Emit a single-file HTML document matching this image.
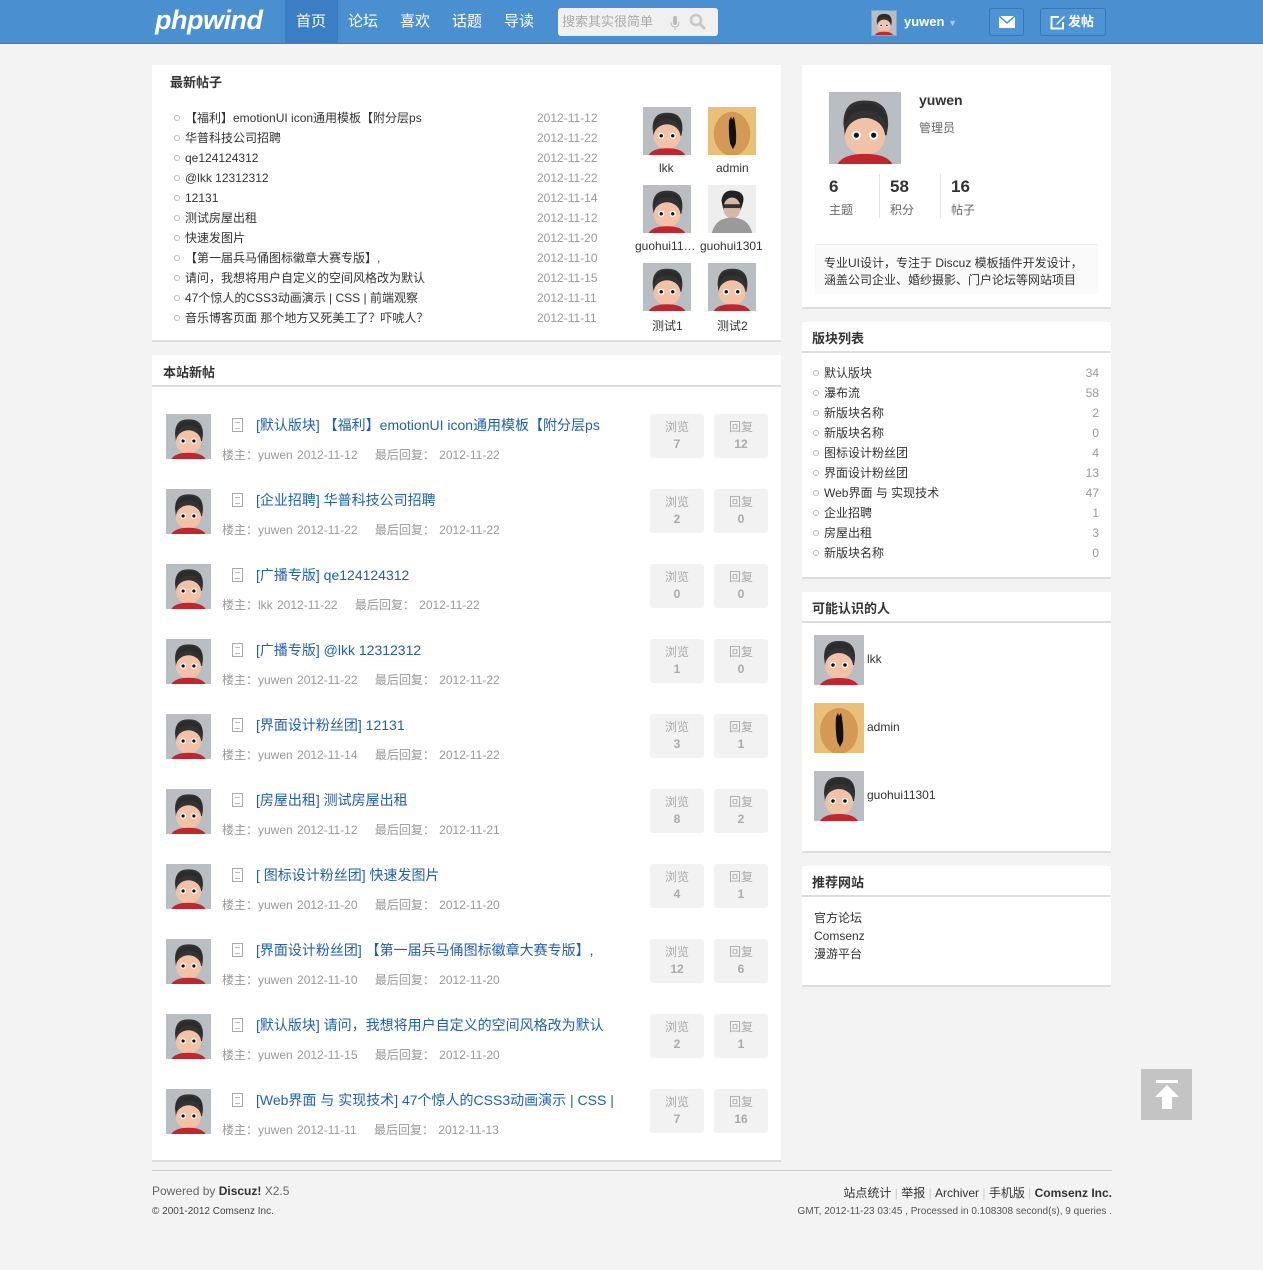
<!DOCTYPE html>
<html><head><meta charset="utf-8">
<style>
*{margin:0;padding:0;box-sizing:border-box}
body{width:1263px;height:1270px;background:#f3f3f3;font-family:"Liberation Sans","Noto Sans CJK SC",sans-serif;font-size:12px;color:#333;position:relative;overflow:hidden}
.a{position:absolute}
#hd{left:0;top:0;width:1263px;height:44px;background:#4a8fd0;border-bottom:1px solid #3b7cbd}
.nav{top:0;height:44px;line-height:44px;color:#fff;font-size:15px;text-align:center;width:52px}
.box{background:#fff;border-bottom:2px solid #ddd}
.ttl{font-weight:bold;font-size:13px;color:#333}
.li{font-size:12px;color:#333;white-space:nowrap}
.li:before{content:"";display:inline-block;width:4px;height:4px;border:1px solid #bbb;border-radius:50%;margin:0 5px 2px 0;vertical-align:middle}
.dt{color:#999;font-size:12px}
.hl{height:2px;background:#ddd}
.tt{color:#1f5fb5;font-size:14px;white-space:nowrap}
.meta{color:#999;font-size:12px;white-space:nowrap;word-spacing:1px}
.cnt{width:54px;height:44px;background:#f2f2f2;border-radius:3px;text-align:center;color:#aaa;font-size:12px;line-height:17px;padding-top:5px}
.cnt b{display:block}
.doc{width:11px;height:14px;border:1px solid #aaa;background:#fff}
.doc:after{content:"";position:absolute;left:2px;top:3px;width:5px;height:5px;border-top:1px solid #bbb;border-bottom:1px solid #bbb}
</style></head><body>
<svg width="0" height="0" style="position:absolute">
<defs>
<symbol id="boy" viewBox="0 0 50 50">
<rect width="50" height="50" fill="#b9bec2"/>
<path d="M10 22 Q10 5 26 6 Q42 6 41 24 L40 30 L11 30Z" fill="#333"/>
<ellipse cx="25" cy="31" rx="14" ry="13" fill="#f2c2a8"/>
<path d="M11 24 Q14 12 28 13 Q38 14 40 26 L40 18 Q36 7 24 8 Q12 9 11 20Z" fill="#2b2b2b"/>
<circle cx="19" cy="30" r="3.2" fill="#fff"/><circle cx="31" cy="30" r="3.2" fill="#fff"/>
<circle cx="19" cy="30" r="1.8" fill="#111"/><circle cx="31" cy="30" r="1.8" fill="#111"/>
<path d="M6 50 Q10 43 25 43 Q40 43 44 50Z" fill="#c0262b"/>
</symbol>
<symbol id="egg" viewBox="0 0 50 50">
<rect width="50" height="50" fill="#e9c07a"/>
<ellipse cx="25" cy="28" rx="19" ry="23" fill="#d49a55"/>
<path d="M22 14 L24 10 L25 13 L27 10 L28 15 Q30 28 29 38 L26 44 L23 38 Q21 26 22 14Z" fill="#111"/>
</symbol>
<symbol id="man" viewBox="0 0 50 50">
<rect width="50" height="50" fill="#eee"/>
<path d="M14 16 Q16 4 28 6 Q40 8 36 20 L34 26 L16 26Z" fill="#222"/>
<ellipse cx="25" cy="24" rx="9" ry="11" fill="#d7b8a4"/>
<rect x="16" y="20" width="18" height="4" fill="#333"/>
<path d="M4 50 Q8 34 25 34 Q42 34 46 50Z" fill="#9a9a9a"/>
</symbol>
</defs></svg>

<div id="hd" class="a">
<div class="a" style="left:155px;top:5px;color:#fff;font-size:27px;font-weight:bold;font-style:italic;letter-spacing:-0.5px">phpwind</div>
<div class="a" style="left:285px;top:0;width:53px;height:44px;background:#3b7ec3"></div>
<div class="a nav" style="left:285px">首页</div>
<div class="a nav" style="left:337px">论坛</div>
<div class="a nav" style="left:389px">喜欢</div>
<div class="a nav" style="left:441px">话题</div>
<div class="a nav" style="left:493px">导读</div>
<div class="a" style="left:558px;top:8px;width:160px;height:28px;background:#f0f0f0;border-radius:3px;color:#aaa;font-size:13px;line-height:28px;padding-left:4px">搜索其实很简单
<svg class="a" style="left:112px;top:8px" width="10" height="14" viewBox="0 0 10 14"><rect x="3" y="0" width="4" height="9" rx="2" fill="#bbb"/><path d="M1 6 Q1 11 5 11 Q9 11 9 6 M5 11 V14" stroke="#bbb" fill="none"/></svg>
<svg class="a" style="left:131px;top:5px" width="18" height="18" viewBox="0 0 18 18"><circle cx="7" cy="7" r="5" stroke="#c8c8c8" stroke-width="2.5" fill="none"/><path d="M11 11 L16 16" stroke="#c8c8c8" stroke-width="3"/></svg>
</div>
<svg class="a" style="left:871px;top:10px;width:26px;height:26px;border:1px solid #7aa9d9"><use href="#boy"/></svg>
<div class="a" style="left:904px;top:14px;color:#fff;font-weight:bold;font-size:13px">yuwen <span style="color:#a9c7e8;font-size:9px">▼</span></div>
<div class="a" style="left:989px;top:8px;width:35px;height:28px;border:1px solid #3a76b4;border-radius:3px;background:#4e93d4">
<svg class="a" style="left:9px;top:7px" width="16" height="12" viewBox="0 0 16 12"><rect width="16" height="12" fill="#fff"/><path d="M0 0 L8 7 L16 0" stroke="#4e93d4" stroke-width="1.5" fill="none"/></svg></div>
<div class="a" style="left:1040px;top:8px;width:66px;height:28px;border:1px solid #3a76b4;border-radius:3px;background:#4e93d4;color:#fff;font-weight:bold;font-size:13px;line-height:26px;padding-left:27px">发帖
<svg class="a" style="left:9px;top:6px" width="16" height="15" viewBox="0 0 16 15"><path d="M9 2 H1.5 V13.5 H13 V7" stroke="#fff" stroke-width="2" fill="none"/><path d="M14 1 L7 8 L6 10 L8 9 L15 2Z" fill="#fff"/></svg></div>
</div>

<!-- 最新帖子 -->
<div class="a box" style="left:152px;top:65px;width:629px;height:277px"></div>
<div class="a ttl" style="left:170px;top:72px">最新帖子</div>
<div class="a" style="left:174px;top:108px;line-height:20px">
<div class="li">【福利】emotionUI icon通用模板【附分层ps</div>
<div class="li">华普科技公司招聘</div>
<div class="li">qe124124312</div>
<div class="li">@lkk 12312312</div>
<div class="li">12131</div>
<div class="li">测试房屋出租</div>
<div class="li">快速发图片</div>
<div class="li">【第一届兵马俑图标徽章大赛专版】,</div>
<div class="li">请问，我想将用户自定义的空间风格改为默认</div>
<div class="li">47个惊人的CSS3动画演示 | CSS | 前端观察</div>
<div class="li">音乐博客页面 那个地方又死美工了？吓唬人？</div>
</div>
<div class="a dt" style="left:537px;top:108px;line-height:20px">2012-11-12<br>2012-11-22<br>2012-11-22<br>2012-11-22<br>2012-11-14<br>2012-11-12<br>2012-11-20<br>2012-11-10<br>2012-11-15<br>2012-11-11<br>2012-11-11</div>
<svg class="a" style="left:643px;top:107px" width="48" height="48"><use href="#boy"/></svg>
<svg class="a" style="left:708px;top:107px" width="48" height="48"><use href="#egg"/></svg>
<svg class="a" style="left:643px;top:185px" width="48" height="48"><use href="#boy"/></svg>
<svg class="a" style="left:708px;top:185px" width="48" height="48"><use href="#man"/></svg>
<svg class="a" style="left:643px;top:263px" width="48" height="48"><use href="#boy"/></svg>
<svg class="a" style="left:708px;top:263px" width="48" height="48"><use href="#boy"/></svg>
<div class="a" style="left:659px;top:161px">lkk</div>
<div class="a" style="left:716px;top:161px">admin</div>
<div class="a" style="left:635px;top:239px;width:66px;overflow:hidden;white-space:nowrap">guohui11…</div>
<div class="a" style="left:700px;top:239px">guohui1301</div>
<div class="a" style="left:652px;top:317px">测试1</div>
<div class="a" style="left:717px;top:317px">测试2</div>

<!-- 本站新帖 -->
<div class="a box" style="left:152px;top:355px;width:629px;height:807px"></div>
<div class="a ttl" style="left:163px;top:362px">本站新帖</div>
<div class="a hl" style="left:152px;top:385px;width:629px"></div>

<div class="a" style="left:152px;top:414px;width:629px;height:750px">
<div class="a" style="top:0;left:0;width:629px">
<svg class="a" style="left:14px;top:0" width="45" height="45"><use href="#boy"/></svg><div class="a doc" style="left:80px;top:4px"></div>
<div class="a tt" style="left:104px;top:1px">[默认版块] 【福利】emotionUI icon通用模板【附分层ps</div>
<div class="a meta" style="left:70px;top:32px">楼主：yuwen 2012-11-12 &nbsp;&nbsp;&nbsp;最后回复： 2012-11-22</div>
<div class="a cnt" style="left:498px;top:0">浏览<b>7</b></div><div class="a cnt" style="left:562px;top:0">回复<b>12</b></div></div>
<div class="a" style="top:75px;left:0;width:629px">
<svg class="a" style="left:14px;top:0" width="45" height="45"><use href="#boy"/></svg><div class="a doc" style="left:80px;top:4px"></div>
<div class="a tt" style="left:104px;top:1px">[企业招聘] 华普科技公司招聘</div>
<div class="a meta" style="left:70px;top:32px">楼主：yuwen 2012-11-22 &nbsp;&nbsp;&nbsp;最后回复： 2012-11-22</div>
<div class="a cnt" style="left:498px;top:0">浏览<b>2</b></div><div class="a cnt" style="left:562px;top:0">回复<b>0</b></div></div>
<div class="a" style="top:150px;left:0;width:629px">
<svg class="a" style="left:14px;top:0" width="45" height="45"><use href="#boy"/></svg><div class="a doc" style="left:80px;top:4px"></div>
<div class="a tt" style="left:104px;top:1px">[广播专版] qe124124312</div>
<div class="a meta" style="left:70px;top:32px">楼主：lkk 2012-11-22 &nbsp;&nbsp;&nbsp;最后回复： 2012-11-22</div>
<div class="a cnt" style="left:498px;top:0">浏览<b>0</b></div><div class="a cnt" style="left:562px;top:0">回复<b>0</b></div></div>
<div class="a" style="top:225px;left:0;width:629px">
<svg class="a" style="left:14px;top:0" width="45" height="45"><use href="#boy"/></svg><div class="a doc" style="left:80px;top:4px"></div>
<div class="a tt" style="left:104px;top:1px">[广播专版] @lkk 12312312</div>
<div class="a meta" style="left:70px;top:32px">楼主：yuwen 2012-11-22 &nbsp;&nbsp;&nbsp;最后回复： 2012-11-22</div>
<div class="a cnt" style="left:498px;top:0">浏览<b>1</b></div><div class="a cnt" style="left:562px;top:0">回复<b>0</b></div></div>
<div class="a" style="top:300px;left:0;width:629px">
<svg class="a" style="left:14px;top:0" width="45" height="45"><use href="#boy"/></svg><div class="a doc" style="left:80px;top:4px"></div>
<div class="a tt" style="left:104px;top:1px">[界面设计粉丝团] 12131</div>
<div class="a meta" style="left:70px;top:32px">楼主：yuwen 2012-11-14 &nbsp;&nbsp;&nbsp;最后回复： 2012-11-22</div>
<div class="a cnt" style="left:498px;top:0">浏览<b>3</b></div><div class="a cnt" style="left:562px;top:0">回复<b>1</b></div></div>
<div class="a" style="top:375px;left:0;width:629px">
<svg class="a" style="left:14px;top:0" width="45" height="45"><use href="#boy"/></svg><div class="a doc" style="left:80px;top:4px"></div>
<div class="a tt" style="left:104px;top:1px">[房屋出租] 测试房屋出租</div>
<div class="a meta" style="left:70px;top:32px">楼主：yuwen 2012-11-12 &nbsp;&nbsp;&nbsp;最后回复： 2012-11-21</div>
<div class="a cnt" style="left:498px;top:0">浏览<b>8</b></div><div class="a cnt" style="left:562px;top:0">回复<b>2</b></div></div>
<div class="a" style="top:450px;left:0;width:629px">
<svg class="a" style="left:14px;top:0" width="45" height="45"><use href="#boy"/></svg><div class="a doc" style="left:80px;top:4px"></div>
<div class="a tt" style="left:104px;top:1px">[ 图标设计粉丝团] 快速发图片</div>
<div class="a meta" style="left:70px;top:32px">楼主：yuwen 2012-11-20 &nbsp;&nbsp;&nbsp;最后回复： 2012-11-20</div>
<div class="a cnt" style="left:498px;top:0">浏览<b>4</b></div><div class="a cnt" style="left:562px;top:0">回复<b>1</b></div></div>
<div class="a" style="top:525px;left:0;width:629px">
<svg class="a" style="left:14px;top:0" width="45" height="45"><use href="#boy"/></svg><div class="a doc" style="left:80px;top:4px"></div>
<div class="a tt" style="left:104px;top:1px">[界面设计粉丝团] 【第一届兵马俑图标徽章大赛专版】,</div>
<div class="a meta" style="left:70px;top:32px">楼主：yuwen 2012-11-10 &nbsp;&nbsp;&nbsp;最后回复： 2012-11-20</div>
<div class="a cnt" style="left:498px;top:0">浏览<b>12</b></div><div class="a cnt" style="left:562px;top:0">回复<b>6</b></div></div>
<div class="a" style="top:600px;left:0;width:629px">
<svg class="a" style="left:14px;top:0" width="45" height="45"><use href="#boy"/></svg><div class="a doc" style="left:80px;top:4px"></div>
<div class="a tt" style="left:104px;top:1px">[默认版块] 请问，我想将用户自定义的空间风格改为默认</div>
<div class="a meta" style="left:70px;top:32px">楼主：yuwen 2012-11-15 &nbsp;&nbsp;&nbsp;最后回复： 2012-11-20</div>
<div class="a cnt" style="left:498px;top:0">浏览<b>2</b></div><div class="a cnt" style="left:562px;top:0">回复<b>1</b></div></div>
<div class="a" style="top:675px;left:0;width:629px">
<svg class="a" style="left:14px;top:0" width="45" height="45"><use href="#boy"/></svg><div class="a doc" style="left:80px;top:4px"></div>
<div class="a tt" style="left:104px;top:1px">[Web界面 与 实现技术] 47个惊人的CSS3动画演示 | CSS |</div>
<div class="a meta" style="left:70px;top:32px">楼主：yuwen 2012-11-11 &nbsp;&nbsp;&nbsp;最后回复： 2012-11-13</div>
<div class="a cnt" style="left:498px;top:0">浏览<b>7</b></div><div class="a cnt" style="left:562px;top:0">回复<b>16</b></div></div>
</div>

<!-- profile -->
<div class="a box" style="left:802px;top:65px;width:309px;height:244px"></div>
<svg class="a" style="left:829px;top:92px" width="72" height="72"><use href="#boy"/></svg>
<div class="a" style="left:919px;top:92px;font-weight:bold;font-size:14px">yuwen</div>
<div class="a" style="left:919px;top:119px;color:#666">管理员</div>
<div class="a" style="left:829px;top:177px;font-weight:bold;font-size:17px">6</div>
<div class="a" style="left:829px;top:201px;color:#666">主题</div>
<div class="a" style="left:879px;top:174px;width:1px;height:44px;background:#e3e3e3"></div>
<div class="a" style="left:890px;top:177px;font-weight:bold;font-size:17px">58</div>
<div class="a" style="left:890px;top:201px;color:#666">积分</div>
<div class="a" style="left:940px;top:174px;width:1px;height:44px;background:#e3e3e3"></div>
<div class="a" style="left:951px;top:177px;font-weight:bold;font-size:17px">16</div>
<div class="a" style="left:951px;top:201px;color:#666">帖子</div>
<div class="a" style="left:815px;top:244px;width:283px;height:50px;background:#fafafa;border-top:1px solid #eee;padding:10px 0 0 9px;line-height:17px;color:#333">专业UI设计，专注于 Discuz 模板插件开发设计，<br>涵盖公司企业、婚纱摄影、门户论坛等网站项目</div>

<!-- 版块列表 -->
<div class="a box" style="left:802px;top:322px;width:309px;height:257px"></div>
<div class="a ttl" style="left:812px;top:328px">版块列表</div>
<div class="a hl" style="left:802px;top:351px;width:309px"></div>
<div class="a" style="left:813px;top:363px;line-height:20px">
<div class="li">默认版块</div><div class="li">瀑布流</div><div class="li">新版块名称</div><div class="li">新版块名称</div><div class="li">图标设计粉丝团</div><div class="li">界面设计粉丝团</div><div class="li">Web界面 与 实现技术</div><div class="li">企业招聘</div><div class="li">房屋出租</div><div class="li">新版块名称</div></div>
<div class="a dt" style="left:1060px;top:363px;width:39px;text-align:right;line-height:20px">34<br>58<br>2<br>0<br>4<br>13<br>47<br>1<br>3<br>0</div>

<!-- 可能认识的人 -->
<div class="a box" style="left:802px;top:592px;width:309px;height:261px"></div>
<div class="a ttl" style="left:812px;top:598px">可能认识的人</div>
<div class="a hl" style="left:802px;top:621px;width:309px"></div>
<svg class="a" style="left:814px;top:635px" width="50" height="50"><use href="#boy"/></svg>
<div class="a" style="left:867px;top:652px">lkk</div>
<svg class="a" style="left:814px;top:703px" width="50" height="50"><use href="#egg"/></svg>
<div class="a" style="left:867px;top:720px">admin</div>
<svg class="a" style="left:814px;top:771px" width="50" height="50"><use href="#boy"/></svg>
<div class="a" style="left:867px;top:788px">guohui11301</div>

<!-- 推荐网站 -->
<div class="a box" style="left:802px;top:866px;width:309px;height:121px"></div>
<div class="a ttl" style="left:812px;top:872px">推荐网站</div>
<div class="a hl" style="left:802px;top:895px;width:309px"></div>
<div class="a" style="left:814px;top:909px;line-height:18px">官方论坛<br>Comsenz<br>漫游平台</div>

<!-- footer -->
<div class="a" style="left:152px;top:1170px;width:960px;height:1px;background:#ccc"></div>
<div class="a" style="left:152px;top:1184px;color:#666">Powered by <b style="color:#333">Discuz!</b> X2.5</div>
<div class="a" style="left:152px;top:1206px;font-size:10px;color:#444">© 2001-2012 Comsenz Inc.</div>
<div class="a" style="left:700px;top:1184px;width:412px;text-align:right;color:#333">站点统计 <span style="color:#ccc">|</span> 举报 <span style="color:#ccc">|</span> Archiver <span style="color:#ccc">|</span> 手机版 <span style="color:#ccc">|</span> <b>Comsenz Inc.</b></div>
<div class="a" style="left:700px;top:1206px;width:412px;text-align:right;font-size:10px;color:#555">GMT, 2012-11-23 03:45 , Processed in 0.108308 second(s), 9 queries .</div>

<div class="a" style="left:1141px;top:1069px;width:51px;height:51px;background:#c4c4c4">
<div class="a" style="left:15px;top:11px;width:22px;height:3px;background:#fff"></div>
<svg class="a" style="left:14px;top:16px" width="24" height="24" viewBox="0 0 24 24"><path d="M12 0 L24 12 H17 V24 H7 V12 H0Z" fill="#fff"/></svg>
</div>
</body></html>
